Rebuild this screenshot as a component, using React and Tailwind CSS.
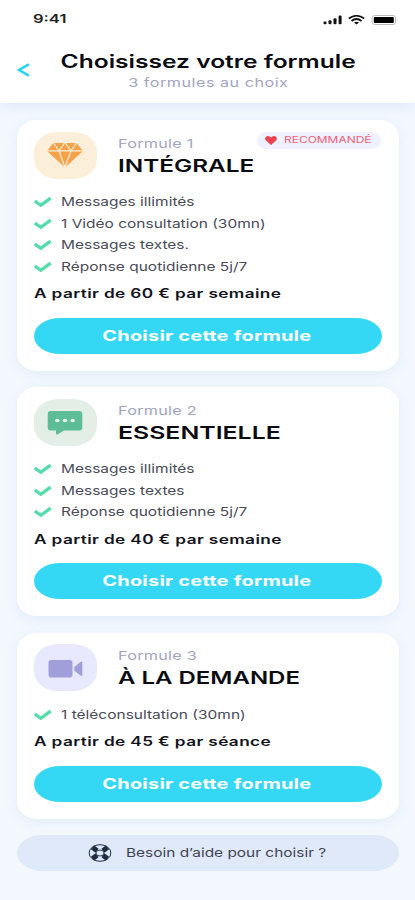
import clsx from 'clsx';

const plans = [
  {
    label: 'Formule 1',
    name: 'INTÉGRALE',
    nameStretch: 'scale-x-[1.39]',
    icon: DiamondIcon,
    tint: 'bg-[#fcefd9]',
    recommended: true,
    features: ['Messages illimités', '1 Vidéo consultation (30mn)', 'Messages textes.', 'Réponse quotidienne 5j/7'],
    price: 'A partir de 60 € par semaine',
  },
  {
    label: 'Formule 2',
    name: 'ESSENTIELLE',
    nameStretch: 'scale-x-[1.42]',
    icon: ChatIcon,
    tint: 'bg-[#e3eee7]',
    features: ['Messages illimités', 'Messages textes', 'Réponse quotidienne 5j/7'],
    price: 'A partir de 40 € par semaine',
  },
  {
    label: 'Formule 3',
    name: 'À LA DEMANDE',
    nameStretch: 'scale-x-[1.37]',
    icon: VideoIcon,
    tint: 'bg-[#e8e8fe]',
    features: ['1 téléconsultation (30mn)'],
    price: 'A partir de 45 € par séance',
  },
];

function DiamondIcon() {
  return (
    <svg className="mr-px" width="36" height="26" viewBox="0 0 36 26">
      <path d="M6.5 1H29.5L36 9L18 25.5L0 9Z" fill="#f5a24b" />
      <path d="M0 8.8H36M6.5 1L12 8.8L18 0.5L24 8.8L29.5 1M12 8.8L18 25.5L24 8.8" fill="none" stroke="#fcefd9" strokeWidth="1.2" />
    </svg>
  );
}

function ChatIcon() {
  return (
    <svg className="mr-px" width="36" height="26" viewBox="0 0 36 26">
      <path d="M4 2H32Q35.3 2 35.3 5V18.5Q35.3 21.5 32 21.5H17L10.5 25.6Q9 26 9 24.3V21.5H4Q0.7 21.5 0.7 18.5V5Q0.7 2 4 2Z" fill="#5cbd96" />
      <g fill="#e3f3eb">
        <ellipse cx="10.3" cy="11.5" rx="2.3" ry="1.8" />
        <ellipse cx="18" cy="11.5" rx="2.3" ry="1.8" />
        <ellipse cx="25.7" cy="11.5" rx="2.3" ry="1.8" />
      </g>
    </svg>
  );
}

function VideoIcon() {
  return (
    <svg className="mr-px" width="36" height="26" viewBox="0 0 36 26" fill="#a09fda">
      <rect x="1.5" y="5" width="24" height="17.5" rx="2.8" />
      <path d="M27.3 12L33.4 7Q35.3 5.8 35.3 7.5V20Q35.3 21.8 33.4 20.6L27.3 15.8Z" />
    </svg>
  );
}

function CheckIcon() {
  return (
    <svg className="relative top-[0.5px]" width="18" height="12" viewBox="0 0 18 12" fill="none" stroke="#55dcab" strokeWidth="3.3">
      <path d="M0.8 5L6.8 9.3L16.6 2.2" />
    </svg>
  );
}

function LifebuoyIcon() {
  return (
    <svg width="24" height="18" viewBox="0 0 24 18" fill="none" stroke="#1f2d42">
      <path d="M4.5 3.2L9 6.8M19.5 3.2L15 6.8M4.5 14.8L9 11.2M19.5 14.8L15 11.2" strokeWidth="5" />
      <ellipse cx="12" cy="9" rx="10.9" ry="8.3" strokeWidth="1" />
      <ellipse cx="12" cy="9" rx="4" ry="3" fill="#dfe9fa" strokeWidth="0.9" />
    </svg>
  );
}

function StatusBar() {
  return (
    <div className="flex h-[38px] items-center justify-between pr-[16px] pl-[33px]">
      <span className="inline-block origin-left scale-x-[1.38] text-[12px] font-semibold text-[#222]">9:41</span>
      <div className="relative top-[0.5px] flex items-center gap-[6px]">
        <svg width="20" height="10" viewBox="0 0 20 10" fill="#111">
          <rect x="1.5" y="6.6" width="3" height="2.7" rx="1" />
          <rect x="6.5" y="5.2" width="3" height="4.1" rx="1" />
          <rect x="11.5" y="3.2" width="3" height="6.1" rx="1" />
          <rect x="16.6" y="0.5" width="3" height="8.8" rx="1" />
        </svg>
        <svg width="17" height="10" viewBox="0 0 17 10" fill="none" stroke="#111" strokeWidth="1.7">
          <path d="M0.8 3.5Q8.5 -2 16.2 3.5" />
          <path d="M3.5 6Q8.5 2 13.5 6" />
          <path d="M6 7.6Q8.5 5.8 11 7.6L8.5 9.6Z" fill="#111" stroke="none" />
        </svg>
        <svg width="28" height="10" viewBox="0 0 28 10">
          <rect x="1" y="0.5" width="23.5" height="9" rx="2.5" fill="none" stroke="#bbb" />
          <rect x="2.8" y="2" width="20" height="6" rx="1" fill="#000" />
          <path d="M25.8 3.5Q27.3 5 25.8 6.5Z" fill="#aaa" />
        </svg>
      </div>
    </div>
  );
}

function Header() {
  return (
    <header className="relative z-10 h-[103px] bg-white shadow-[0_2px_12px_rgba(110,145,210,0.16)]">
      <StatusBar />
      <div className="grid grid-cols-[61px_1fr_59px] pt-3">
        <button className="flex items-start pt-[13px] pl-[17px]">
          <svg width="13" height="14" viewBox="0 0 13 14" fill="none" stroke="#22d6f3" strokeWidth="2.4">
            <path d="M11.8 1.4L2 7L11.8 12.6" />
          </svg>
        </button>
        <div className="flex flex-col items-center whitespace-nowrap">
          <h1 className="scale-x-[1.365] text-[18px] leading-[24px] font-semibold text-[#0b0b12]">Choisissez votre formule</h1>
          <p className="scale-x-[1.35] text-[12px] leading-[18px] tracking-[0.36px] text-[#a2a5bf]">3 formules au choix</p>
        </div>
      </div>
    </header>
  );
}

function Badge() {
  return (
    <div className="mr-px flex h-[17px] w-[124px] items-center rounded-full bg-[#eff1fe] pl-[8px]">
      <svg width="12" height="9" viewBox="0 0 12 9" fill="#f0414f">
        <path d="M6 9L1 4.6Q-0.6 2.8 0.8 1.1Q2.6 -0.8 4.8 0.6L6 1.6L7.2 0.6Q9.4 -0.8 11.2 1.1Q12.6 2.8 11 4.6Z" />
      </svg>
      <span className="ml-[7px] origin-left scale-x-[1.26] text-[9.5px] text-[#ee5f78]">RECOMMANDÉ</span>
    </div>
  );
}

function PlanCard({ plan }) {
  const Icon = plan.icon;

  return (
    <section className="rounded-[20px/17px] bg-white px-[17px] pt-[11.5px] pb-[17px] shadow-[0_3px_12px_rgba(110,145,210,0.12)]">
      <div className="flex items-start">
        <div className={clsx('flex h-[47px] w-[63px] shrink-0 items-center justify-center rounded-[24px/20px]', plan.tint)}>
          <Icon />
        </div>
        <div className="ml-[21px] flex-1 whitespace-nowrap">
          <div className="flex h-[22px] items-start justify-between">
            <span className="origin-left scale-x-[1.35] text-[12px] leading-[23px] tracking-[0.2px] text-[#a2a5bf]">{plan.label}</span>
            {plan.recommended && <Badge />}
          </div>
          <h2 className={clsx('inline-block origin-left align-top text-[17.5px] leading-[23px] font-semibold text-[#0b0b12]', plan.nameStretch)}>
            {plan.name}
          </h2>
        </div>
      </div>

      <ul className="mt-[12.5px]">
        {plan.features.map((feature) => (
          <li key={feature} className="flex h-[21.5px] items-center whitespace-nowrap">
            <CheckIcon />
            <span className="ml-[9px] origin-left scale-x-[1.29] pt-px text-[12px] leading-[20px] text-[#4a4b57]">{feature}</span>
          </li>
        ))}
      </ul>

      <p className="h-[40.5px] pt-[3px] whitespace-nowrap">
        <span className="inline-block origin-left scale-x-[1.38] text-[12.5px] leading-[20px] font-semibold tracking-[0.26px] text-[#14141c]">{plan.price}</span>
      </p>

      <button className="flex h-9 w-full items-center justify-center rounded-[26px/18px] bg-[#34d8f5]">
        <span className="relative -left-px scale-x-[1.38] text-[14.5px] font-bold tracking-[0.15px] whitespace-nowrap text-white">Choisir cette formule</span>
      </button>
    </section>
  );
}

export default function App() {
  return (
    <div className="h-[900px] w-[415px] overflow-hidden bg-[#f3f8fe] font-['Inter',sans-serif]">
      <Header />
      <main className="flex flex-col gap-[16.5px] pt-[17px] pr-4 pl-[17px]">
        {plans.map((plan) => (
          <PlanCard key={plan.label} plan={plan} />
        ))}
        <button className="flex h-9 items-center rounded-[26px/18px] bg-[#dfe9fa] pl-[71px]">
          <LifebuoyIcon />
          <span className="ml-[14px] origin-left scale-x-[1.285] text-[12px] whitespace-nowrap text-[#3f4452]">Besoin d’aide pour choisir ?</span>
        </button>
      </main>
    </div>
  );
}
